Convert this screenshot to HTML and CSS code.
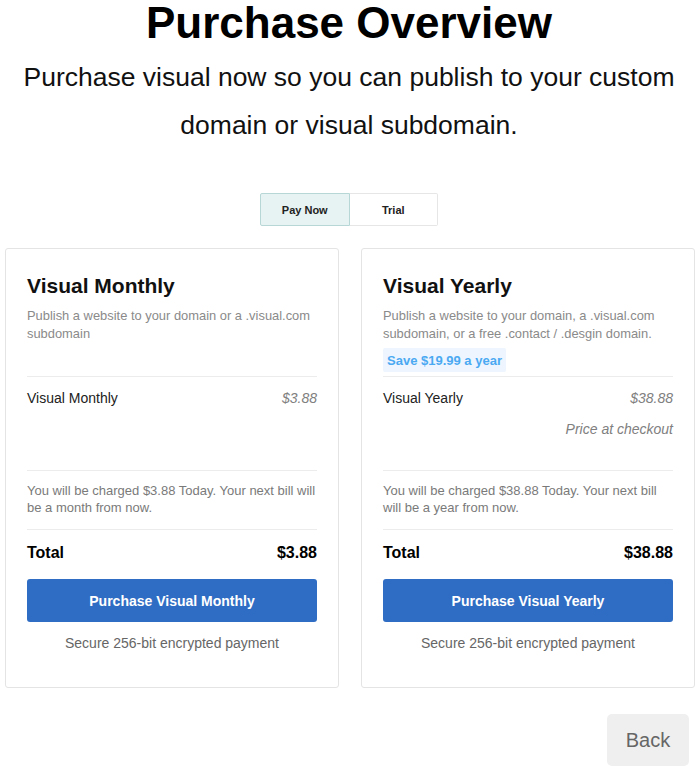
FILE: index.html
```html
<!DOCTYPE html>
<html lang="en">
<head>
<meta charset="utf-8">
<title>Purchase Overview</title>
<link rel="stylesheet" href="styles.css">
</head>
<body>
<div class="page">
  <h1 class="title">Purchase Overview</h1>
  <p class="subtitle">Purchase visual now so you can publish to your custom domain or visual subdomain.</p>

  <div class="toggle">
    <button class="toggle-btn active">Pay Now</button>
    <button class="toggle-btn">Trial</button>
  </div>

  <div class="cards">
    <div class="card">
      <div class="card-head">
        <h2 class="card-title">Visual Monthly</h2>
        <p class="card-desc">Publish a website to your domain or a .visual.com subdomain</p>
      </div>
      <div class="card-items">
        <div class="item-row"><span>Visual Monthly</span><span class="price">$3.88</span></div>
      </div>
      <p class="charge">You will be charged $3.88 Today. Your next bill will be a month from now.</p>
      <div class="total"><span>Total</span><span>$3.88</span></div>
      <button class="buy">Purchase Visual Monthly</button>
      <p class="secure">Secure 256-bit encrypted payment</p>
    </div>

    <div class="card">
      <div class="card-head">
        <h2 class="card-title">Visual Yearly</h2>
        <p class="card-desc">Publish a website to your domain, a .visual.com subdomain, or a free .contact / .desgin domain.</p>
        <span class="badge">Save $19.99 a year</span>
      </div>
      <div class="card-items">
        <div class="item-row"><span>Visual Yearly</span><span class="price">$38.88</span></div>
        <div class="item-note">Price at checkout</div>
      </div>
      <p class="charge">You will be charged $38.88 Today. Your next bill will be a year from now.</p>
      <div class="total"><span>Total</span><span>$38.88</span></div>
      <button class="buy">Purchase Visual Yearly</button>
      <p class="secure">Secure 256-bit encrypted payment</p>
    </div>
  </div>

  <div class="footer">
    <button class="back">Back</button>
  </div>
</div>
</body>
</html>
```

FILE: styles.css
```css
* { box-sizing: border-box; }

body {
  margin: 0;
  font-family: "Liberation Sans", Arial, sans-serif;
  color: #000;
  background: #fff;
}

.page {
  width: 698px;
  display: flex;
  flex-direction: column;
}

.title {
  margin: 0;
  font-size: 44px;
  line-height: 46px;
  font-weight: bold;
  text-align: center;
}

.subtitle {
  margin: 7px auto 0;
  width: 690px;
  font-size: 26.5px;
  line-height: 48px;
  text-align: center;
  color: #111;
}

.toggle {
  margin: 44px auto 0;
  display: flex;
  width: 178px;
  height: 33px;
}

.toggle-btn {
  flex: 1;
  font-family: "Liberation Sans", Arial, sans-serif;
  font-size: 11px;
  font-weight: bold;
  color: #222;
  background: #fff;
  border: 1px solid #e6e6e6;
  border-left: none;
  border-radius: 0 2px 2px 0;
  padding: 0;
}

.toggle-btn.active {
  background: #e7f3f3;
  border: 1px solid #b7d7d6;
  border-radius: 2px 0 0 2px;
}

.cards {
  margin-top: 22px;
  padding-left: 5px;
  display: flex;
  gap: 22px;
}

.card {
  width: 334px;
  border: 1px solid #e4e4e4;
  border-radius: 3px;
  padding: 25px 21px 34px;
  display: flex;
  flex-direction: column;
}

.card-head {
  min-height: 103px;
  border-bottom: 1px solid #ececec;
  display: flex;
  flex-direction: column;
  align-items: flex-start;
}

.card-title {
  margin: 0;
  font-size: 21px;
  line-height: 24px;
  font-weight: bold;
  color: #111;
}

.card-desc {
  margin: 9px 0 0;
  font-size: 12.9px;
  line-height: 18px;
  color: #8a8a8a;
}

.badge {
  margin-top: 5px;
  height: 24px;
  padding: 0 4px;
  display: flex;
  align-items: center;
  background: #eef5fe;
  border-radius: 2px;
  color: #4aa9f2;
  font-size: 13px;
  font-weight: bold;
}

.card-items {
  min-height: 94px;
  padding-top: 11px;
  border-bottom: 1px solid #ececec;
  display: flex;
  flex-direction: column;
  gap: 11px;
}

.item-row {
  display: flex;
  justify-content: space-between;
  font-size: 14px;
  line-height: 20px;
  color: #222;
}

.price {
  font-style: italic;
  color: #808080;
}

.item-note {
  text-align: right;
  font-size: 14px;
  line-height: 20px;
  font-style: italic;
  color: #808080;
}

.charge {
  margin: 0;
  padding: 11px 0 13px;
  border-bottom: 1px solid #ececec;
  font-size: 13px;
  line-height: 17px;
  color: #7a7a7a;
}

.total {
  margin-top: 13px;
  display: flex;
  justify-content: space-between;
  font-size: 16px;
  line-height: 20px;
  font-weight: bold;
  color: #000;
}

.buy {
  margin-top: 16px;
  height: 43px;
  width: 100%;
  border: none;
  border-radius: 3px;
  background: #2f6dc4;
  color: #fff;
  font-family: "Liberation Sans", Arial, sans-serif;
  font-size: 14px;
  font-weight: bold;
}

.secure {
  margin: 11px 0 0;
  text-align: center;
  font-size: 14px;
  line-height: 20px;
  color: #666;
}

.footer {
  margin-top: 26px;
  display: flex;
  justify-content: flex-end;
  padding-right: 9px;
}

.back {
  width: 82px;
  height: 52px;
  border: none;
  border-radius: 5px;
  background: #efefef;
  color: #666;
  font-family: "Liberation Sans", Arial, sans-serif;
  font-size: 20px;
}
```
